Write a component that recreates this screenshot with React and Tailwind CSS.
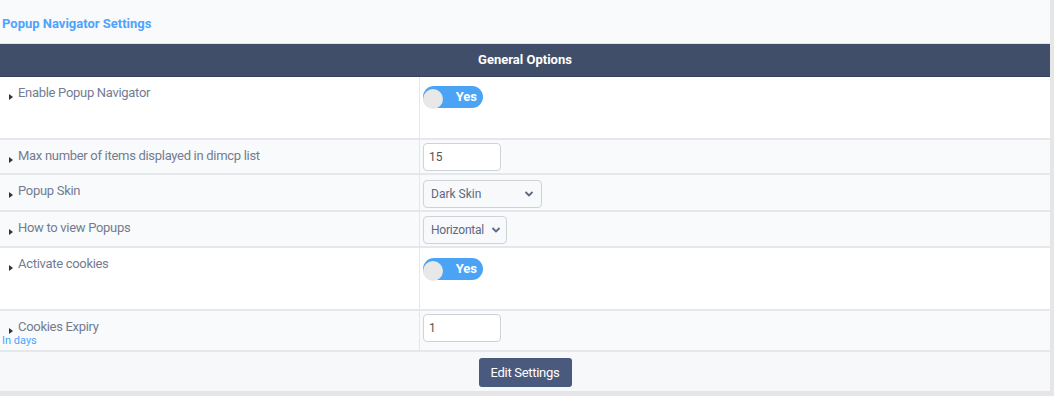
import React from 'react'

const font = { fontFamily: 'Roboto, "Liberation Sans", sans-serif' }

function Label({ children, note }) {
  return (
    <div className="w-[420px] shrink-0 border-r border-[#e4e6ea] pt-[8px] pl-[9px] relative">
      <div className="flex items-start text-[13px] leading-[16px] tracking-[-0.3px] text-[#737c92]">
        <span className="mt-[9px] mr-[5px] w-0 h-0 border-y-[3px] border-y-transparent border-l-[4px] border-l-[#333]" />
        <span>{children}</span>
      </div>
      {note && <div className="-ml-[7px] -mt-[1px] text-[11px] leading-[13px] text-[#4da3ff]">{note}</div>}
    </div>
  )
}

function Toggle() {
  return (
    <div className="relative w-[60px] h-[22px] rounded-full bg-[#4aa3f5]">
      <span className="absolute left-0 top-[3px] w-[20px] h-[20px] rounded-full bg-[#e8e8e8]" />
      <span className="absolute right-[6px] top-[2px] text-[13px] leading-[18px] font-bold text-white">Yes</span>
    </div>
  )
}

function Row({ label, note, height, bg, children }) {
  return (
    <div className={`flex border-b-2 border-[#e5e7eb] ${bg} ${height}`}>
      <Label note={note}>{label}</Label>
      <div className="pl-[3px] pt-[3px]">{children}</div>
    </div>
  )
}

export default function App() {
  return (
    <div className="w-[1054px] h-[396px] bg-[#e6e6e6] overflow-hidden" style={font}>
      <div className="w-[1050px] bg-white">
        <div className="h-[44px] bg-[#f9fafc] border-b border-[#dfe2e7] pl-[2px] pt-[11px]">
          <span className="text-[13px] font-bold text-[#4da3ff]">Popup Navigator Settings</span>
        </div>
        <div className="h-[33px] bg-[#414e69] border-b border-[#36415a] flex items-center justify-center">
          <span className="text-[13px] font-bold text-white">General Options</span>
        </div>

        <Row label="Enable Popup Navigator" bg="bg-white" height="h-[63px]">
          <div className="pt-[6px]"><Toggle /></div>
        </Row>
        <Row label="Max number of items displayed in dimcp list" bg="bg-[#f9fafb]" height="h-[35px]">
          <input
            defaultValue="15"
            className="w-[78px] h-[28px] border border-[#cfd2d6] rounded-[4px] bg-white px-[5px] text-[12px] text-[#555]"
          />
        </Row>
        <Row label="Popup Skin" bg="bg-[#f9fafb]" height="h-[37px]">
          <div className="pt-[2px]">
            <div className="w-[119px] h-[28px] border border-[#cfd2d6] rounded-[4px] bg-[#f8f9fa] flex items-center justify-between px-[7px] text-[12px] text-[#5d6884]">
              <span>Dark Skin</span>
              <svg width="10" height="8" viewBox="0 0 10 8"><path d="M1.5 2 L5 5.5 L8.5 2" fill="none" stroke="#5d6884" strokeWidth="1.8" /></svg>
            </div>
          </div>
        </Row>
        <Row label="How to view Popups" bg="bg-[#f9fafb]" height="h-[36px]">
          <div className="pt-[1px]">
            <div className="w-[84px] h-[28px] border border-[#cfd2d6] rounded-[4px] bg-[#f8f9fa] flex items-center justify-between pl-[7px] pr-[5px] text-[12px] tracking-[-0.2px] text-[#5d6884]">
              <span>Horizontal</span>
              <svg width="10" height="8" viewBox="0 0 10 8"><path d="M1.5 2 L5 5.5 L8.5 2" fill="none" stroke="#5d6884" strokeWidth="1.8" /></svg>
            </div>
          </div>
        </Row>
        <Row label="Activate cookies" bg="bg-white" height="h-[63px]">
          <div className="pt-[7px]"><Toggle /></div>
        </Row>
        <Row label="Cookies Expiry" note="In days" bg="bg-[#f9fafb]" height="h-[41px]">
          <input
            defaultValue="1"
            className="w-[78px] h-[28px] border border-[#cfd2d6] rounded-[4px] bg-white px-[5px] text-[12px] text-[#555]"
          />
        </Row>

        <div className="h-[42px] bg-[#f7f8fa] border-b-[3px] border-[#e3e5e8] flex justify-center pt-[6px]">
          <button className="w-[93px] h-[29px] rounded-[3px] bg-[#4a5a7e] text-white text-[13px] tracking-[-0.3px]">Edit Settings</button>
        </div>
      </div>
    </div>
  )
}
